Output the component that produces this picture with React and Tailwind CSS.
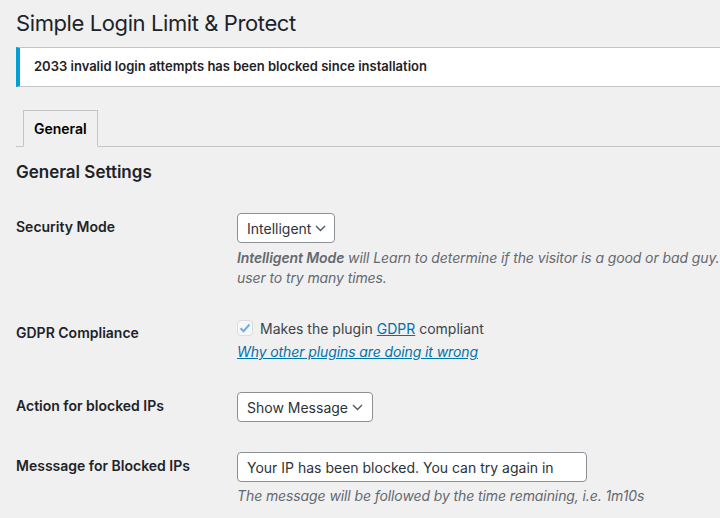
import React from 'react'

const FONT = { fontFamily: 'Inter, "Noto Sans", sans-serif' }

// ── Small select-like box ──────────────────────────────────────────────────
function FakeSelect({ label, width }) {
  return (
    <div className={`${width} h-[30px] bg-white border border-[#8c8f94] rounded-[4px] flex items-center justify-between pl-[9px] pr-[9px] text-[14px] text-[#2c3338] whitespace-nowrap`}>
      <span>{label}</span>
      <svg width="11" height="7" viewBox="0 0 11 7" fill="none" className="shrink-0 ml-1">
        <path d="M1 1l4.5 4.5L10 1" stroke="#50575e" strokeWidth="1.4" />
      </svg>
    </div>
  )
}

function Row({ label, labelPad = 'pt-[4px]', mt, children }) {
  return (
    <div className={`flex ${mt}`}>
      <div className={`w-[221px] shrink-0 ${labelPad} text-[14px] leading-[20px] font-semibold text-[#1d2327]`}>{label}</div>
      <div className="flex-1">{children}</div>
    </div>
  )
}

export default function App() {
  return (
    <div className="w-[720px] h-[518px] overflow-hidden bg-[#f0f0f1]" style={FONT}>
      <div className="w-[1000px] pl-4">
        <h1 className="pt-[8px] text-[22px] leading-[30px] font-normal tracking-[-0.4px] text-[#1d2327]">Simple Login Limit &amp; Protect</h1>

        {/* notice */}
        <div className="mt-[9px] h-[40px] bg-white border border-[#c3c4c7] border-l-4 border-l-[#00a0d2] flex items-center pl-[14px]">
          <p className="text-[13px] font-semibold text-[#1d2327]">2033 invalid login attempts has been blocked since installation</p>
        </div>

        {/* tabs */}
        <div className="mt-[23px] border-b border-[#c3c4c7] flex pl-[7px] h-[37px]">
          <div className="h-[37px] px-[10px] border border-[#c3c4c7] border-b-[#f0f0f1] bg-[#f0f0f1] flex items-center text-[14px] font-semibold text-black">
            General
          </div>
        </div>

        <h2 className="mt-[15px] text-[17px] leading-[20px] font-semibold text-[#1d2327]">General Settings</h2>

        <div className="mt-[31px]">
          <Row label="Security Mode">
            <FakeSelect label="Intelligent" width="w-[98px]" />
            <p className="mt-[5px] text-[14px] leading-[20px] italic tracking-[-0.1px] text-[#646970]">
              <b className="font-semibold">Intelligent Mode</b> will Learn to determine if the visitor is a good or bad guy.
              <br />user to try many times.
            </p>
          </Row>

          <Row label="GDPR Compliance" labelPad="pt-[5px]" mt="mt-[30px]">
            <div className="flex items-center h-[20px] text-[14px] text-[#3c434a]">
              <span className="w-4 h-4 rounded-[4px] border border-[#dcdcde] bg-[#f6f7f7] flex items-center justify-center mr-[7px]">
                <svg width="12" height="10" viewBox="0 0 12 10" fill="none">
                  <path d="M1.5 5.2l3 3L10.5 1.5" stroke="#72aee6" strokeWidth="2" />
                </svg>
              </span>
              Makes the plugin&nbsp;<a className="text-[#0073aa] underline">GDPR</a>&nbsp;compliant
            </div>
            <a className="block mt-[4px] text-[14px] leading-[20px] italic tracking-[-0.1px] text-[#0073aa] underline">Why other plugins are doing it wrong</a>
          </Row>

          <Row label="Action for blocked IPs" mt="mt-[30px]">
            <FakeSelect label="Show Message" width="w-[136px]" />
          </Row>

          <Row label="Messsage for Blocked IPs" mt="mt-[30px]">
            <div className="w-[350px] h-[30px] bg-white border border-[#8c8f94] rounded-[4px] flex items-center px-[9px] text-[14px] text-[#2c3338]">
              Your IP has been blocked. You can try again in
            </div>
            <p className="mt-[4px] text-[14px] leading-[20px] italic tracking-[-0.1px] text-[#646970]">The message will be followed by the time remaining, i.e. 1m10s</p>
          </Row>
        </div>
      </div>
    </div>
  )
}
